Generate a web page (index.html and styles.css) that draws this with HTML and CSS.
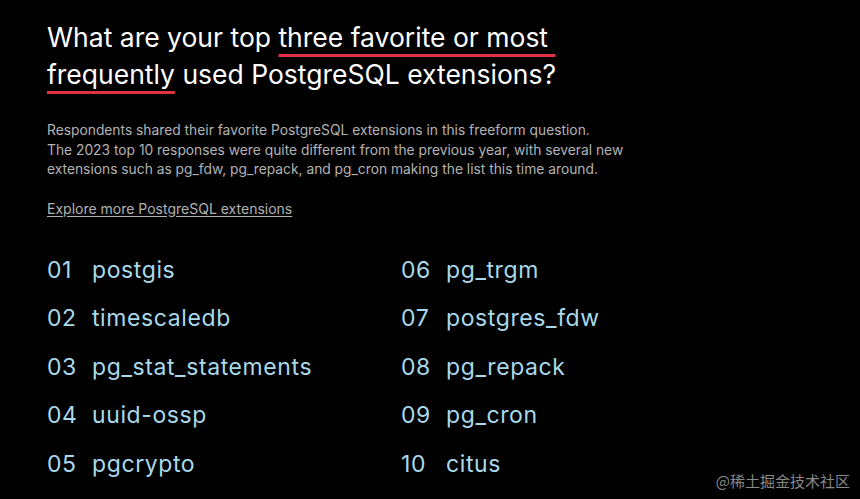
FILE: index.html
```html
<!DOCTYPE html>
<html lang="en">
<head>
<meta charset="utf-8">
<link rel="stylesheet" href="styles.css">
</head>
<body>
<main class="page">
  <h1 class="title">What are your top <span class="mark">three favorite or most&nbsp;</span><br><span class="mark">frequently</span> used PostgreSQL extensions?</h1>
  <p class="desc">Respondents shared their favorite PostgreSQL extensions in this freeform question.<br>The 2023 top 10 responses were quite different from the previous year, with several new<br>extensions such as pg_fdw, pg_repack, and pg_cron making the list this time around.</p>
  <a class="link" href="#">Explore more PostgreSQL extensions</a>
  <ol class="list">
    <li class="item"><span class="num">01</span><span class="name">postgis</span></li>
    <li class="item"><span class="num">06</span><span class="name">pg_trgm</span></li>
    <li class="item"><span class="num">02</span><span class="name">timescaledb</span></li>
    <li class="item"><span class="num">07</span><span class="name">postgres_fdw</span></li>
    <li class="item"><span class="num">03</span><span class="name">pg_stat_statements</span></li>
    <li class="item"><span class="num">08</span><span class="name">pg_repack</span></li>
    <li class="item"><span class="num">04</span><span class="name">uuid-ossp</span></li>
    <li class="item"><span class="num">09</span><span class="name">pg_cron</span></li>
    <li class="item"><span class="num">05</span><span class="name">pgcrypto</span></li>
    <li class="item"><span class="num">10</span><span class="name">citus</span></li>
  </ol>
  <div class="watermark">@稀土掘金技术社区</div>
</main>
</body>
</html>
```
FILE: styles.css
```css
html, body {
  margin: 0;
  padding: 0;
  background: #000;
  height: 100%;
}
.page {
  position: relative;
  box-sizing: border-box;
  height: 499px;
  padding: 19px 0 0 47px;
  font-family: Inter, "Noto Sans", sans-serif;
  overflow: hidden;
}
.title {
  margin: 0;
  font-size: 26.5px;
  font-weight: 400;
  line-height: 37px;
  color: #fff;
  letter-spacing: 0;
}
.mark {
  text-decoration: underline;
  text-decoration-color: #e03145;
  text-decoration-thickness: 3px;
  text-underline-offset: 7px;
}
.desc {
  margin: 28px 0 0;
  font-size: 13.8px;
  line-height: 19.5px;
  color: #b3b3b3;
  letter-spacing: 0;
}
.link {
  display: inline-block;
  margin-top: 19px;
  font-size: 14px;
  line-height: 19px;
  color: #b3b3b3;
  text-decoration: underline;
  text-underline-offset: 2px;
}
.list {
  list-style: none;
  margin: 37px 0 0;
  padding: 0;
  display: grid;
  grid-template-columns: 354px 354px;
  grid-auto-rows: 48.5px;
}
.item {
  display: flex;
  font-size: 23px;
  line-height: 30px;
  letter-spacing: 0.6px;
  color: #a9d9ea;
}
.num {
  width: 45px;
  flex: none;
}
.watermark {
  position: absolute;
  right: 10px;
  bottom: 8px;
  font-family: "Noto Sans CJK SC", sans-serif;
  font-size: 15px;
  color: #8a8a8a;
}
```
